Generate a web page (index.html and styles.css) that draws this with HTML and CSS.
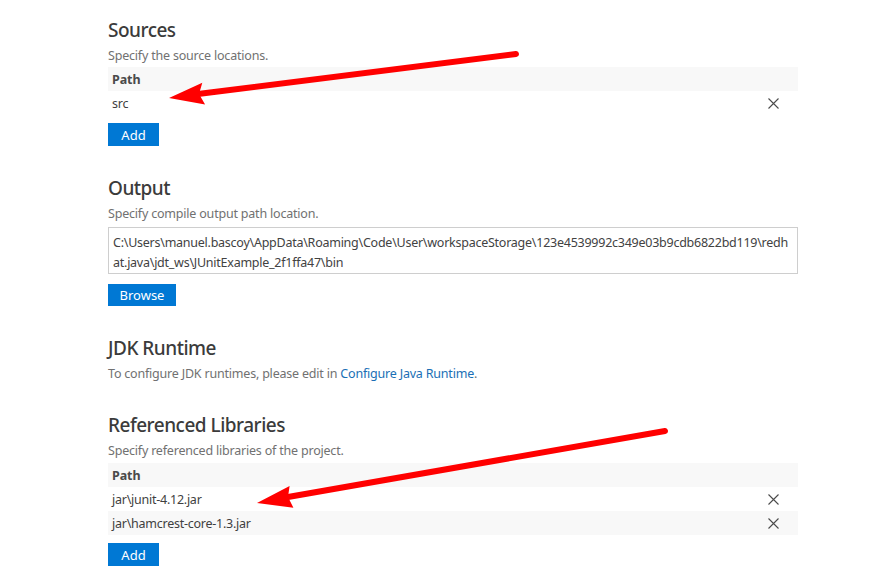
FILE: index.html
```html
<!DOCTYPE html>
<html>
<head>
<meta charset="utf-8">
<link rel="stylesheet" href="styles.css">
</head>
<body>
<div class="page">
  <section class="section">
    <h2 class="title">Sources</h2>
    <p class="desc">Specify the source locations.</p>
    <div class="table first">
      <div class="row head"><span>Path</span></div>
      <div class="row"><span>src</span><svg class="del" width="11" height="11" viewBox="0 0 11 11"><path d="M0.5 0.5L10.5 10.5M10.5 0.5L0.5 10.5" stroke="#4b4b4b" stroke-width="1.1" fill="none"/></svg></div>
    </div>
    <button class="btn">Add</button>
  </section>

  <section class="section">
    <h2 class="title">Output</h2>
    <p class="desc">Specify compile output path location.</p>
    <div class="pathbox">C:\Users\manuel.bascoy\AppData\Roaming\Code\User\workspaceStorage\123e4539992c349e03b9cdb6822bd119\redhat.java\jdt_ws\JUnitExample_2f1ffa47\bin</div>
    <button class="btn browse">Browse</button>
  </section>

  <section class="section jdk">
    <h2 class="title">JDK Runtime</h2>
    <p class="desc">To configure JDK runtimes, please edit in <a class="link">Configure Java Runtime</a>.</p>
  </section>

  <section class="section">
    <h2 class="title">Referenced Libraries</h2>
    <p class="desc">Specify referenced libraries of the project.</p>
    <div class="table">
      <div class="row head"><span>Path</span></div>
      <div class="row"><span>jar\junit-4.12.jar</span><svg class="del" width="11" height="11" viewBox="0 0 11 11"><path d="M0.5 0.5L10.5 10.5M10.5 0.5L0.5 10.5" stroke="#4b4b4b" stroke-width="1.1" fill="none"/></svg></div>
      <div class="row"><span>jar\hamcrest-core-1.3.jar</span><svg class="del" width="11" height="11" viewBox="0 0 11 11"><path d="M0.5 0.5L10.5 10.5M10.5 0.5L0.5 10.5" stroke="#4b4b4b" stroke-width="1.1" fill="none"/></svg></div>
    </div>
    <button class="btn">Add</button>
  </section>
</div>

<svg class="arrows" width="890" height="584" viewBox="0 0 890 584">
  <line x1="516" y1="54" x2="198" y2="94" stroke="#ff0000" stroke-width="6" stroke-linecap="round"/>
  <polygon points="169,98 202.3,82.7 199,94 205.1,104.5" fill="#ff0000"/>
  <line x1="665" y1="431" x2="288" y2="497" stroke="#ff0000" stroke-width="6" stroke-linecap="round"/>
  <polygon points="257,503 289.6,486.1 288,497 293.4,507.7" fill="#ff0000"/>
</svg>
</body>
</html>
```

FILE: styles.css
```css
html, body {
  margin: 0;
  padding: 0;
  background: #ffffff;
}

body {
  font-family: "Noto Sans", "Open Sans", sans-serif;
  color: #424242;
  position: relative;
  width: 890px;
  height: 584px;
  overflow: hidden;
}

.page {
  padding: 17px 0 0 108px;
  width: 690px;
}

.section {
  margin-bottom: 29px;
}

.section.jdk {
  margin-bottom: 29px;
}

.title {
  margin: 0;
  font-size: 19px;
  font-weight: 500;
  line-height: 26px;
  letter-spacing: -0.5px;
  color: #3b3b3b;
}

.desc {
  margin: 4px 0 0 0;
  font-size: 12.5px;
  line-height: 18px;
  letter-spacing: -0.2px;
  color: #717171;
}

.link {
  color: #1a6fb5;
  text-decoration: none;
}

.table {
  margin-top: 3px;
  display: flex;
  flex-direction: column;
}

.table.first {
  margin-top: 2px;
}

.row {
  height: 24px;
  display: flex;
  align-items: center;
  justify-content: space-between;
  padding: 0 19px 0 4px;
  font-size: 12.5px;
  letter-spacing: -0.25px;
  color: #3f3f3f;
}

.row:nth-child(odd) {
  background: #f8f8f8;
}

.row.head {
  font-weight: 700;
  color: #4a4a4a;
  letter-spacing: -0.1px;
}

.del {
  display: block;
}

.btn {
  display: block;
  margin-top: 8px;
  height: 23px;
  width: 51px;
  padding: 0;
  border: none;
  background: #0078d4;
  color: #ffffff;
  font-family: "Noto Sans", "Open Sans", sans-serif;
  font-size: 13px;
}

.btn.browse {
  width: 68px;
  margin-top: 10px;
  height: 22px;
}

.pathbox {
  margin-top: 4px;
  border: 1px solid #cecece;
  padding: 5px 4px 1px 4px;
  font-size: 12.5px;
  line-height: 19.5px;
  letter-spacing: -0.25px;
  color: #424242;
  word-break: break-all;
}

.arrows {
  position: absolute;
  left: 0;
  top: 0;
  pointer-events: none;
}
```
